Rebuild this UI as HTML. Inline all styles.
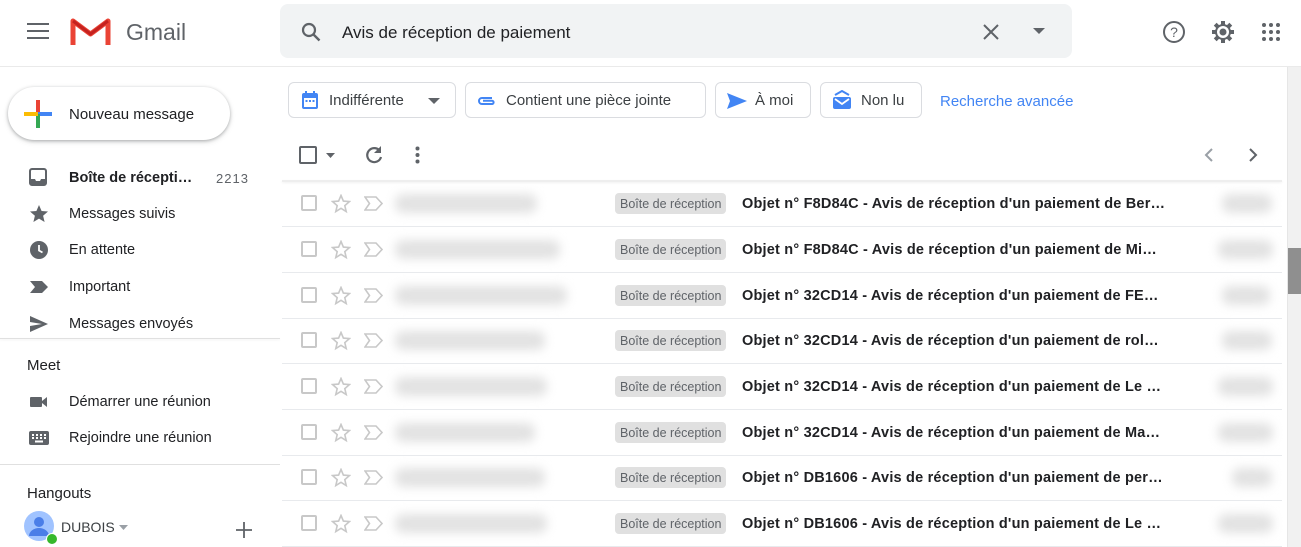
<!DOCTYPE html>
<html><head><meta charset="utf-8"><style>
*{margin:0;padding:0;box-sizing:border-box}
body{width:1301px;height:547px;overflow:hidden;background:#fff;font-family:"Liberation Sans",Arial,sans-serif;color:#202124;position:relative}
.a{position:absolute}
.nav{position:absolute;left:0;width:280px;height:36px;font-size:14.5px;color:#202124}
.nav svg{position:absolute;left:29px;top:9px}
.nav span{position:absolute;left:69px;top:11px}
.chip{position:absolute;top:82px;height:36px;border:1px solid #dadce0;border-radius:6px;font-size:15px;color:#3c4043}
.chip span{top:9px!important}
.row{position:absolute;left:282px;width:1000px;height:46px;border-bottom:1px solid #e8eaed}
.cb{position:absolute;left:19px;top:14px;width:16px;height:16px;border:2px solid #c8c8c8;border-radius:2px}
.blur{position:absolute;top:13px;height:19px;background:#e2e2e2;border-radius:8px;filter:blur(5px)}
.lbl{position:absolute;left:333px;top:12px;height:21px;padding:0 5px;background:#e0e0e0;border-radius:4px;font-size:12.5px;line-height:22px;color:#5f6368}
.subj{position:absolute;left:460px;top:15px;font-size:14.5px;font-weight:bold;letter-spacing:0.2px;color:#202124;white-space:nowrap}
</style></head><body>
<svg class="a" style="left:27px;top:22px" width="22" height="18"><path d="M0 2h22M0 9h22M0 16h22" stroke="#5f6368" stroke-width="2"/></svg>
<svg class="a" style="left:70px;top:16px" width="41" height="31" viewBox="0 0 41 31"><path d="M3 29V5l17.5 13L38 5v24" fill="none" stroke="#ea4335" stroke-width="5" stroke-linejoin="round"/><path d="M3 5l17.5 13L38 5" fill="none" stroke="#c5221f" stroke-width="3"/></svg>
<div class="a" style="left:126px;top:19px;font-size:23px;color:#5f6368">Gmail</div>
<div class="a" style="left:280px;top:4px;width:792px;height:54px;background:#f1f3f4;border-radius:8px"></div>
<svg class="a" style="left:301px;top:22px" width="20" height="20"><circle cx="8" cy="8" r="6" fill="none" stroke="#5f6368" stroke-width="2.2"/><path d="M12.5 12.5l6 6" stroke="#5f6368" stroke-width="2.4"/></svg>
<div class="a" style="left:342px;top:23px;font-size:17px;color:#202124">Avis de réception de paiement</div>
<svg class="a" style="left:983px;top:24px" width="16" height="16"><path d="M1 1l14 14M15 1L1 15" stroke="#5f6368" stroke-width="2"/></svg>
<svg class="a" style="left:1033px;top:28px" width="12" height="7"><path d="M0 0h12L6 6z" fill="#5f6368"/></svg>
<svg class="a" style="left:1162px;top:20px" width="24" height="24"><circle cx="12" cy="12" r="10" fill="none" stroke="#5f6368" stroke-width="2"/><text x="12" y="17" font-size="14" text-anchor="middle" fill="#5f6368" font-family="Liberation Sans">?</text></svg>
<svg class="a" style="left:1210px;top:19px" width="26" height="26" viewBox="0 0 26 26"><g fill="#5f6368"><circle cx="13" cy="13" r="8"/><g stroke="#5f6368" stroke-width="4"><path d="M13 2v22M2 13h22M5.2 5.2l15.6 15.6M20.8 5.2L5.2 20.8"/></g></g><circle cx="13" cy="13" r="6" fill="#fff"/><circle cx="13" cy="13" r="3.5" fill="#5f6368"/></svg>
<svg class="a" style="left:1262px;top:23px" width="18" height="18"><g fill="#5f6368"><circle cx="2" cy="2" r="2"/><circle cx="9" cy="2" r="2"/><circle cx="16" cy="2" r="2"/><circle cx="2" cy="9" r="2"/><circle cx="9" cy="9" r="2"/><circle cx="16" cy="9" r="2"/><circle cx="2" cy="16" r="2"/><circle cx="9" cy="16" r="2"/><circle cx="16" cy="16" r="2"/></g></svg>
<div class="a" style="left:0;top:66px;width:1301px;height:1px;background:#eaeaea"></div>

<div class="a" style="left:8px;top:87px;width:222px;height:53px;border-radius:27px;background:#fff;box-shadow:0 1px 3px rgba(60,64,67,.35),0 2px 6px rgba(60,64,67,.15)"></div>
<svg class="a" style="left:24px;top:100px" width="28" height="28"><rect x="12" y="0" width="4" height="14" fill="#ea4335"/><rect x="14" y="12" width="14" height="4" fill="#4285f4"/><rect x="12" y="14" width="4" height="14" fill="#34a853"/><rect x="0" y="12" width="14" height="4" fill="#fbbc04"/></svg>
<div class="a" style="left:69px;top:106px;font-size:15px;color:#202124">Nouveau message</div>

<div class="nav" style="top:159px"><svg width="18" height="18"><rect x="1" y="1" width="16" height="16" rx="2" fill="none" stroke="#5f6368" stroke-width="2"/><path d="M1 11h5l1 2h4l1-2h5v6H1z" fill="#5f6368"/></svg><span style="font-weight:bold">Boîte de récepti…</span><span style="left:216px;top:12px;font-size:13px;color:#5f6368;letter-spacing:1px">2213</span></div>
<div class="nav" style="top:195px"><svg width="20" height="20"><path d="M10 1l2.6 6 6.4.5-4.9 4.2 1.5 6.3L10 14.6 4.4 18l1.5-6.3L1 7.5 7.4 7z" fill="#5f6368"/></svg><span>Messages suivis</span></div>
<div class="nav" style="top:231px"><svg width="20" height="20"><circle cx="10" cy="10" r="9" fill="#5f6368"/><path d="M10 5v5.5l3.5 2" stroke="#fff" stroke-width="1.8" fill="none"/></svg><span>En attente</span></div>
<div class="nav" style="top:268px"><svg width="20" height="20"><path d="M1 4h12l6 6-6 6H1l5-6z" fill="#5f6368"/></svg><span>Important</span></div>
<div class="nav" style="top:305px"><svg width="20" height="20"><path d="M1 2l18 8-18 8v-6l12-2-12-2z" fill="#5f6368"/></svg><span>Messages envoyés</span></div>
<div class="a" style="left:0;top:338px;width:280px;height:1px;background:#e0e0e0;box-shadow:0 1px 2px rgba(0,0,0,.08)"></div>
<div class="a" style="left:27px;top:357px;font-size:15px">Meet</div>
<div class="nav" style="top:383px"><svg width="20" height="20"><rect x="1" y="5" width="12" height="10" rx="1" fill="#5f6368"/><path d="M13 9l5-4v10l-5-4z" fill="#5f6368"/></svg><span>Démarrer une réunion</span></div>
<div class="nav" style="top:419px"><svg width="20" height="20"><rect x="0" y="3" width="20" height="14" rx="2" fill="#5f6368"/><g fill="#fff"><rect x="3" y="6" width="2" height="2"/><rect x="7" y="6" width="2" height="2"/><rect x="11" y="6" width="2" height="2"/><rect x="15" y="6" width="2" height="2"/><rect x="3" y="9" width="2" height="2"/><rect x="7" y="9" width="2" height="2"/><rect x="11" y="9" width="2" height="2"/><rect x="15" y="9" width="2" height="2"/><rect x="6" y="12.5" width="8" height="2"/></g></svg><span>Rejoindre une réunion</span></div>
<div class="a" style="left:0;top:464px;width:280px;height:1px;background:#e0e0e0"></div>
<div class="a" style="left:27px;top:485px;font-size:15px">Hangouts</div>
<svg class="a" style="left:23px;top:510px" width="38" height="37"><circle cx="16" cy="16" r="15" fill="#a0c3ff"/><circle cx="16" cy="12" r="5" fill="#4a7ee8"/><path d="M6 26a10 8 0 0 1 20 0z" fill="#4a7ee8"/><circle cx="29" cy="29" r="6" fill="#fff"/><circle cx="29" cy="29" r="5" fill="#36b82c"/></svg>
<div class="a" style="left:61px;top:519px;font-size:14px;color:#3c4043">DUBOIS</div>
<svg class="a" style="left:119px;top:525px" width="9" height="5"><path d="M0 0h9L4.5 5z" fill="#9aa0a6"/></svg>
<svg class="a" style="left:236px;top:522px" width="16" height="16"><path d="M8 0v16M0 8h16" stroke="#5f6368" stroke-width="1.8"/></svg>

<div class="chip" style="left:288px;width:168px"><svg class="a" style="left:12px;top:8px" width="18" height="19"><rect x="1" y="2" width="16" height="16" rx="2" fill="#4285f4"/><rect x="3" y="7" width="12" height="9" fill="#fff"/><g fill="#4285f4"><rect x="4.5" y="9" width="2" height="2"/><rect x="8" y="9" width="2" height="2"/><rect x="11.5" y="9" width="2" height="2"/></g><rect x="4" y="0" width="2" height="4" fill="#4285f4"/><rect x="12" y="0" width="2" height="4" fill="#4285f4"/></svg><span class="a" style="left:40px">Indifférente</span><svg class="a" style="left:139px;top:15px" width="12" height="6"><path d="M0 0h12L6 6z" fill="#5f6368"/></svg></div>
<div class="chip" style="left:465px;width:241px"><svg class="a" style="left:10px;top:12px" width="22" height="12"><path d="M16 3H6a3 3 0 0 0 0 6h10a1.6 1.6 0 0 0 0-3.2H7" fill="none" stroke="#4285f4" stroke-width="2"/></svg><span class="a" style="left:40px">Contient une pièce jointe</span></div>
<div class="chip" style="left:715px;width:96px"><svg class="a" style="left:10px;top:9px" width="22" height="18"><path d="M1 1l20 8-20 8 3-8z" fill="#4285f4"/></svg><span class="a" style="left:39px">À moi</span></div>
<div class="chip" style="left:820px;width:102px"><svg class="a" style="left:10px;top:7px" width="22" height="20"><path d="M4 5l7-4 7 4" fill="none" stroke="#4285f4" stroke-width="2"/><rect x="2" y="7" width="18" height="12" rx="2" fill="#4285f4"/><path d="M4 9l7 5 7-5" fill="none" stroke="#fff" stroke-width="1.8"/></svg><span class="a" style="left:40px">Non lu</span></div>
<div class="a" style="left:940px;top:93px;font-size:15px;color:#4285f4">Recherche avancée</div>

<div class="a" style="left:299px;top:146px;width:18px;height:18px;border:2px solid #5f6368;border-radius:2px"></div>
<svg class="a" style="left:326px;top:153px" width="9" height="5"><path d="M0 0h9L4.5 5z" fill="#5f6368"/></svg>
<svg class="a" style="left:364px;top:145px" width="20" height="20"><path d="M15.5 5.5A7 7 0 1 0 17 12" fill="none" stroke="#5f6368" stroke-width="2.2"/><path d="M17 1v7h-7z" fill="#5f6368"/></svg>
<svg class="a" style="left:415px;top:146px" width="5" height="18"><circle cx="2.5" cy="2.5" r="2" fill="#5f6368"/><circle cx="2.5" cy="9" r="2" fill="#5f6368"/><circle cx="2.5" cy="15.5" r="2" fill="#5f6368"/></svg>
<svg class="a" style="left:1204px;top:148px" width="10" height="14"><path d="M8 1L2 7l6 6" fill="none" stroke="#9aa0a6" stroke-width="2"/></svg>
<svg class="a" style="left:1248px;top:148px" width="10" height="14"><path d="M2 1l6 6-6 6" fill="none" stroke="#5f6368" stroke-width="2"/></svg>
<div class="a" style="left:282px;top:180px;width:1000px;height:2px;background:#eee;box-shadow:0 1px 2px rgba(0,0,0,.06)"></div>

<div class="a" style="left:1287px;top:67px;width:14px;height:480px;background:#f1f1f1;border-left:1px solid #e6e6e6"></div>
<div class="a" style="left:1288px;top:248px;width:13px;height:46px;background:#8f8f8f"></div>

<div class="row" style="top:181px"><div class="cb"></div><svg class="a" style="left:49px;top:13px" width="20" height="20"><path d="M10 1.5l2.4 5.6 6 .5-4.6 4 1.4 5.9L10 14.3 4.8 17.5l1.4-5.9-4.6-4 6-.5z" fill="none" stroke="#c8c8c8" stroke-width="1.6"/></svg><svg class="a" style="left:82px;top:15px" width="20" height="15"><path d="M1 1h11l6 6.5-6 6.5H1l4.5-6.5z" fill="none" stroke="#c8c8c8" stroke-width="1.6"/></svg><div class="blur" style="left:113px;width:142px"></div><div class="lbl">Boîte de réception</div><div class="subj">Objet n° F8D84C - Avis de réception d'un paiement de Ber…</div><div class="blur" style="left:940px;width:50px"></div></div>
<div class="row" style="top:227px"><div class="cb"></div><svg class="a" style="left:49px;top:13px" width="20" height="20"><path d="M10 1.5l2.4 5.6 6 .5-4.6 4 1.4 5.9L10 14.3 4.8 17.5l1.4-5.9-4.6-4 6-.5z" fill="none" stroke="#c8c8c8" stroke-width="1.6"/></svg><svg class="a" style="left:82px;top:15px" width="20" height="15"><path d="M1 1h11l6 6.5-6 6.5H1l4.5-6.5z" fill="none" stroke="#c8c8c8" stroke-width="1.6"/></svg><div class="blur" style="left:113px;width:165px"></div><div class="lbl">Boîte de réception</div><div class="subj">Objet n° F8D84C - Avis de réception d'un paiement de Mi…</div><div class="blur" style="left:936px;width:55px"></div></div>
<div class="row" style="top:273px"><div class="cb"></div><svg class="a" style="left:49px;top:13px" width="20" height="20"><path d="M10 1.5l2.4 5.6 6 .5-4.6 4 1.4 5.9L10 14.3 4.8 17.5l1.4-5.9-4.6-4 6-.5z" fill="none" stroke="#c8c8c8" stroke-width="1.6"/></svg><svg class="a" style="left:82px;top:15px" width="20" height="15"><path d="M1 1h11l6 6.5-6 6.5H1l4.5-6.5z" fill="none" stroke="#c8c8c8" stroke-width="1.6"/></svg><div class="blur" style="left:113px;width:172px"></div><div class="lbl">Boîte de réception</div><div class="subj">Objet n° 32CD14 - Avis de réception d'un paiement de FE…</div><div class="blur" style="left:940px;width:48px"></div></div>
<div class="row" style="top:318px"><div class="cb"></div><svg class="a" style="left:49px;top:13px" width="20" height="20"><path d="M10 1.5l2.4 5.6 6 .5-4.6 4 1.4 5.9L10 14.3 4.8 17.5l1.4-5.9-4.6-4 6-.5z" fill="none" stroke="#c8c8c8" stroke-width="1.6"/></svg><svg class="a" style="left:82px;top:15px" width="20" height="15"><path d="M1 1h11l6 6.5-6 6.5H1l4.5-6.5z" fill="none" stroke="#c8c8c8" stroke-width="1.6"/></svg><div class="blur" style="left:113px;width:150px"></div><div class="lbl">Boîte de réception</div><div class="subj">Objet n° 32CD14 - Avis de réception d'un paiement de rol…</div><div class="blur" style="left:940px;width:50px"></div></div>
<div class="row" style="top:364px"><div class="cb"></div><svg class="a" style="left:49px;top:13px" width="20" height="20"><path d="M10 1.5l2.4 5.6 6 .5-4.6 4 1.4 5.9L10 14.3 4.8 17.5l1.4-5.9-4.6-4 6-.5z" fill="none" stroke="#c8c8c8" stroke-width="1.6"/></svg><svg class="a" style="left:82px;top:15px" width="20" height="15"><path d="M1 1h11l6 6.5-6 6.5H1l4.5-6.5z" fill="none" stroke="#c8c8c8" stroke-width="1.6"/></svg><div class="blur" style="left:113px;width:152px"></div><div class="lbl">Boîte de réception</div><div class="subj">Objet n° 32CD14 - Avis de réception d'un paiement de Le …</div><div class="blur" style="left:936px;width:55px"></div></div>
<div class="row" style="top:410px"><div class="cb"></div><svg class="a" style="left:49px;top:13px" width="20" height="20"><path d="M10 1.5l2.4 5.6 6 .5-4.6 4 1.4 5.9L10 14.3 4.8 17.5l1.4-5.9-4.6-4 6-.5z" fill="none" stroke="#c8c8c8" stroke-width="1.6"/></svg><svg class="a" style="left:82px;top:15px" width="20" height="15"><path d="M1 1h11l6 6.5-6 6.5H1l4.5-6.5z" fill="none" stroke="#c8c8c8" stroke-width="1.6"/></svg><div class="blur" style="left:113px;width:140px"></div><div class="lbl">Boîte de réception</div><div class="subj">Objet n° 32CD14 - Avis de réception d'un paiement de Ma…</div><div class="blur" style="left:936px;width:55px"></div></div>
<div class="row" style="top:455px"><div class="cb"></div><svg class="a" style="left:49px;top:13px" width="20" height="20"><path d="M10 1.5l2.4 5.6 6 .5-4.6 4 1.4 5.9L10 14.3 4.8 17.5l1.4-5.9-4.6-4 6-.5z" fill="none" stroke="#c8c8c8" stroke-width="1.6"/></svg><svg class="a" style="left:82px;top:15px" width="20" height="15"><path d="M1 1h11l6 6.5-6 6.5H1l4.5-6.5z" fill="none" stroke="#c8c8c8" stroke-width="1.6"/></svg><div class="blur" style="left:113px;width:150px"></div><div class="lbl">Boîte de réception</div><div class="subj">Objet n° DB1606 - Avis de réception d'un paiement de per…</div><div class="blur" style="left:950px;width:40px"></div></div>
<div class="row" style="top:501px"><div class="cb"></div><svg class="a" style="left:49px;top:13px" width="20" height="20"><path d="M10 1.5l2.4 5.6 6 .5-4.6 4 1.4 5.9L10 14.3 4.8 17.5l1.4-5.9-4.6-4 6-.5z" fill="none" stroke="#c8c8c8" stroke-width="1.6"/></svg><svg class="a" style="left:82px;top:15px" width="20" height="15"><path d="M1 1h11l6 6.5-6 6.5H1l4.5-6.5z" fill="none" stroke="#c8c8c8" stroke-width="1.6"/></svg><div class="blur" style="left:113px;width:152px"></div><div class="lbl">Boîte de réception</div><div class="subj">Objet n° DB1606 - Avis de réception d'un paiement de Le …</div><div class="blur" style="left:936px;width:55px"></div></div>
</body></html>
